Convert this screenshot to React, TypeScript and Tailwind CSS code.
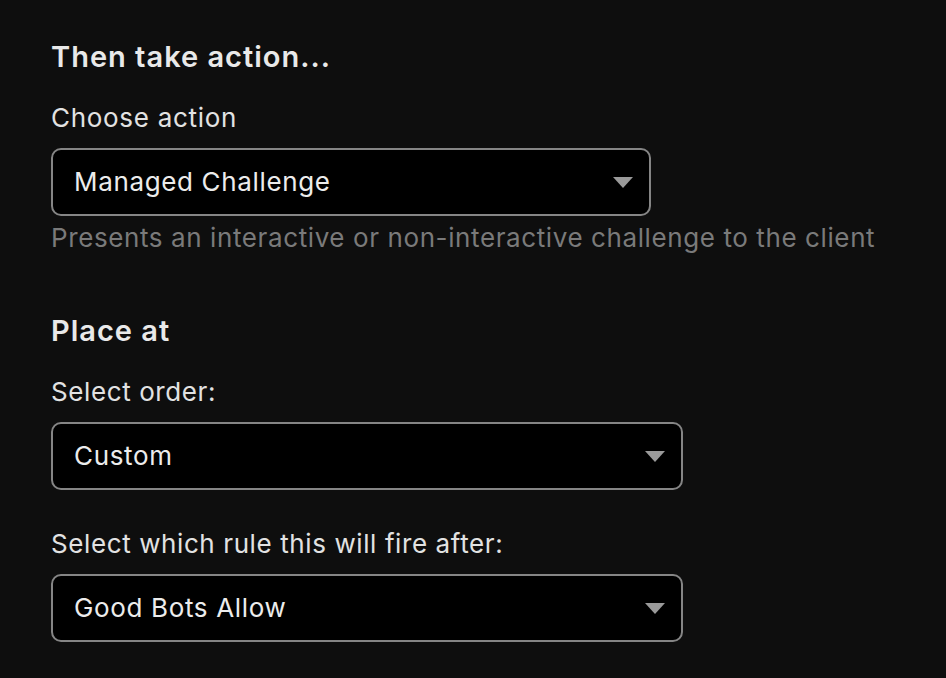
import React from "react";

function Caret() {
  return (
    <svg width="20" height="11" viewBox="0 0 20 11" className="shrink-0">
      <path d="M0 0 L20 0 L10 11 Z" fill="#9a9a9a" />
    </svg>
  );
}

function Select({ value, width }: { value: string; width: string }) {
  return (
    <div
      className={`${width} h-[68px] flex items-center justify-between rounded-[10px] border-2 border-[#858585] bg-black pl-[21px] pr-[16px] text-[26px] leading-[32px] tracking-[0.65px] text-[#ececec]`}
    >
      <span>{value}</span>
      <Caret />
    </div>
  );
}

export default function App() {
  return (
    <div
      className="w-[946px] h-[678px] bg-[#0e0e0e] pl-[51px] pt-[39px]"
      style={{ fontFamily: "Inter, 'Noto Sans', sans-serif" }}
    >
      <h2 className="text-[29px] leading-[36px] font-semibold tracking-[1px] text-[#e9e9e9]">Then take action...</h2>
      <div className="mt-[27px] text-[26px] leading-[32px] tracking-[0.7px] text-[#e2e2e2]">Choose action</div>
      <div className="mt-[14px]">
        <Select value="Managed Challenge" width="w-[600px]" />
      </div>
      <div className="mt-[6px] text-[26px] leading-[32px] tracking-[0.6px] text-[#7a7a7a] whitespace-nowrap">
        Presents an interactive or non-interactive challenge to the client
      </div>
      <h2 className="mt-[59px] text-[29px] leading-[36px] font-semibold tracking-[1px] text-[#e9e9e9]">Place at</h2>
      <div className="mt-[27px] text-[26px] leading-[32px] tracking-[0.6px] text-[#e2e2e2]">Select order:</div>
      <div className="mt-[14px]">
        <Select value="Custom" width="w-[632px]" />
      </div>
      <div className="mt-[38px] text-[26px] leading-[32px] tracking-[0.6px] text-[#e2e2e2]">Select which rule this will fire after:</div>
      <div className="mt-[14px]">
        <Select value="Good Bots Allow" width="w-[632px]" />
      </div>
    </div>
  );
}
